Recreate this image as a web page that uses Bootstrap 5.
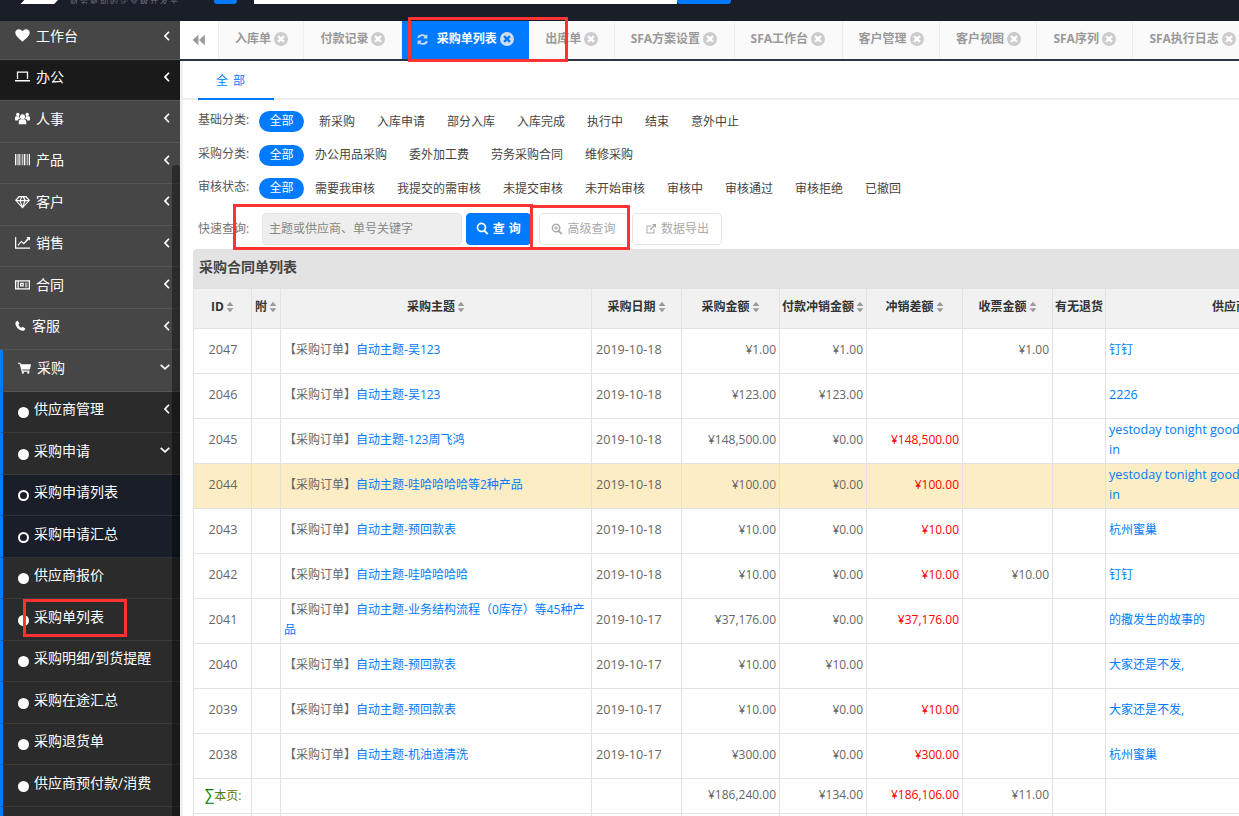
<!DOCTYPE html>
<html lang="zh-CN">
<head>
<meta charset="utf-8">
<title>采购单列表</title>
<link href="https://cdn.jsdelivr.net/npm/bootstrap@5.3.0/dist/css/bootstrap.min.css" rel="stylesheet">
<style>
html,body{height:100%;overflow:hidden}
body{font-family:"Open Sans","Noto Sans CJK SC",sans-serif;font-size:12px;color:#666;background:#fff}
.ico{fill:currentColor;flex:none}
.page-root{width:1239px;height:816px;overflow:hidden}
.red-box{position:absolute;border:3px solid #f33;pointer-events:none;z-index:5}
.rb-tab{left:408px;top:17px;width:160px;height:45px}
.rb-search{left:233px;top:204px;width:300px;height:46px}
.rb-adv{left:530px;top:205px;width:100px;height:45px}
.rb-menu{left:23px;top:599px;width:104px;height:38px}
.top-head{height:21px;background:#1a1e29;overflow:hidden}
.logo-bit{width:48px;height:4px;margin-left:10px;background:#fff;clip-path:polygon(0 0,100% 0,92% 100%,22% 100%,30% 0)}
.logo-txt{margin-left:12px;width:110px;height:4px;overflow:hidden;font-size:8px;line-height:1px;color:#6d7078;letter-spacing:2px;white-space:nowrap}
.head-b1{width:23px;height:4px;margin-left:34px;background:#007bff;border-radius:0 0 3px 3px}
.head-in{width:423px;height:4px;margin-left:17px;background:#fff}
.head-b2{width:54px;height:4px;background:#007bff;border-radius:0 0 3px 3px}
.side{width:180px;height:795px;background:#2b2b2b;overflow:hidden}
.side-scroll{position:absolute;left:172px;top:165px;width:8px;height:651px;background:rgba(0,0,0,.38);border-radius:4px 4px 0 0;z-index:2}
.s-item{height:41.5px;display:flex;align-items:center;padding:0 10px 6px 15px;color:#fff;font-size:14px;background:#464646;border-bottom:1px solid #555;text-decoration:none}
.s-first{height:38.5px;padding-bottom:8px}
.s-dark{background:#1a1a1a}
.s-item .ico{margin-right:6px}
.s-item .ico.chev{margin-right:0}
.s-lab{flex:1;white-space:nowrap}
.s-open{border-left:3px solid #007bff;padding-left:15px}
.s-sub{background:#2b2b2b;border-bottom-color:#3b3b3b;padding-left:15px}
.s-deep{background:#1a1e29;border-bottom-color:#2d313b}
.dot{width:11px;height:11px;border-radius:50%;background:#fff;flex:none;margin:8px 5px 0 0}
.dot-o{background:none;border:2px solid #fff}
.main-col{width:1059px;height:795px;background:#fff;overflow:hidden}
.tab-bar{height:40px;background:#fafafa;border-bottom:2px solid #2d3545;flex-wrap:nowrap;overflow:hidden}
.tab-back{width:39px;background:#fff;color:#999;border-right:1px solid #eee}
.tab-i{height:38px;padding:0 15.400px 2px 16px;display:flex;align-items:center;font-weight:700;color:#999;border-right:1px solid #eee;white-space:nowrap;flex:none;text-decoration:none}
.tab-i .ico{margin-left:3px;color:#ccc}
.tab-sfa{padding-right:16.500px}
.tab-on{background:#007bff;color:#fff;padding-left:14px;border-right:0}
.tab-on .ico-ref{margin:0 8px 0 0;color:#c9d8ea}
.body-wrap{border-left:3px solid #f0f0f0;height:755px}
.sub-tabs{height:39px;margin:0;padding-left:15px;border-bottom:2px solid #eee}
.sub-tab{width:76px;height:39px;padding:2px 10px 0 0;border-bottom:2px solid #007bff;color:#007bff;display:flex;align-items:center;justify-content:center;text-decoration:none;letter-spacing:1px}
.f-row{height:33.500px;padding-left:15px;color:#444;white-space:nowrap}
.f-first{margin-top:5px}
.f-lab{width:61px;color:#555;margin-top:-3px;flex:none}
.f-pill{width:45px;height:21px;border-radius:11px;background:#007bff;color:#fff;display:flex;align-items:center;justify-content:center;padding-bottom:1px;text-decoration:none}
.f-pill.gap-r{margin-right:4px}
.f-link{padding:0 11px;color:#444;text-decoration:none}
.q-row{height:32px;padding-left:15px;margin-top:7px;margin-bottom:4px}
.q-lab{width:64px;color:#777;flex:none}
.q-in{width:200px;height:32px;font-size:12px;background:#eee;border:1px solid #e5e5e5;padding:0 6px;color:#666;border-radius:4px}
.q-in::placeholder{color:#888;opacity:1}
.q-btn{height:32px;font-size:12px;font-weight:700;padding:0;border-radius:4px;display:flex;align-items:center;justify-content:center;background:#007bff;border-color:#007bff;width:65px;margin-left:4px;color:#fff}
.q-go{letter-spacing:.5px}
.q-ghost{background:#fff;border:1px solid #e5e5e5;color:#aaa;font-weight:400;width:89px;margin-left:8px}
.q-ghost2{width:90px;margin-left:4px}
.q-btn .ico{margin-right:4px}
.panel-w{margin-left:10px;width:1161px}
.panel-t{height:39px;background:#e3e3e3;border-radius:4px 4px 0 0;font-size:14px;font-weight:700;color:#444;padding:0 6px 3px;display:flex;align-items:center}
.grid-t{table-layout:fixed;width:1161px;margin:0;border-color:#e2e2e2;color:#666}
.grid-t>:not(caption)>*>*{padding:0 3px 2px 4px;vertical-align:middle;line-height:20px;color:inherit;background:transparent;box-shadow:none;border-color:#e2e2e2}
.grid-t>thead>tr>th{background:#f1f1f1;font-weight:700;color:#333;text-align:center;white-space:nowrap;padding:0 0 3px}
.grid-t thead tr{height:40px}
.grid-t tbody tr{height:45px}
.grid-t>tbody>tr>td.n{text-align:right;padding-right:3px}
.grid-t>tbody>tr>td.d{font-size:12.6px}
.grid-t>tbody>tr>td.c{text-align:center;font-size:12.6px}
.grid-t>tbody>tr>td.r{color:#f00;text-align:right}
.grid-t>tbody>tr>td.subj{padding-left:3px}
.grid-t>tbody>tr>td.sup{padding-left:3px;white-space:nowrap}
.grid-t a{color:#007bff;text-decoration:none}
.grid-t a.lat{font-size:12.6px}
.grid-t tbody tr.row-warn{background:#fdedc4}
.grid-t tbody tr.row-sum{height:35px}
.grid-t>tbody>tr.row-sum>td{padding-bottom:2px}
.grid-t>tbody>tr>td.sig{color:#5a7a00;font-size:12px}
.sig b{color:#008000;font-weight:400;font-size:15px}
.grid-t tbody tr.row-end{height:10px}
.sort-i{color:#999;margin-left:2px;vertical-align:-2px}
</style>
</head>
<body>
<svg width="0" height="0" class="position-absolute">
<defs>
<symbol id="i-heart" viewBox="0 0 24 24"><path d="M12 22C5 16 .5 12 .5 7.300.5 4 3 1.800 6.300 1.800c2.300 0 4.300 1.100 5.700 3.200 1.400-2.100 3.400-3.200 5.700-3.200 3.300 0 5.800 2.200 5.800 5.500C23.500 12 19 16 12 22z"/></symbol>
<symbol id="i-laptop" viewBox="0 0 24 24"><path d="M3 4h18v12h-2V6H5v10H3zM0 17.500h24V20H0z"/></symbol>
<symbol id="i-users" viewBox="0 0 24 24"><circle cx="12" cy="9" r="4"/><circle cx="4.500" cy="5.500" r="2.700"/><circle cx="19.500" cy="5.500" r="2.700"/><path d="M6 21v-4c0-2.500 2-4 3-4h6c1 0 3 1.500 3 4v4zM0 14v-3c0-1.500 1-2.500 2-2.500h4.300c.3 1.500 1 2.500 2 3.500C6 12.500 4.800 14 4.600 15H1C.4 15 0 14.600 0 14zM24 14v-3c0-1.500-1-2.500-2-2.500h-4.300c-.3 1.500-1 2.500-2 3.500 2.300.5 3.500 2 3.700 3H23c.6 0 1-.4 1-1z"/></symbol>
<symbol id="i-bar" viewBox="0 0 24 24"><path d="M0 3h2v18H0zM3 3h1v18H3zM5.500 3h2v18h-2zM9 3h1v18H9zM11.500 3h1v18h-1zM14 3h2v18h-2zM17 3h1v18h-1zM19.500 3h1v18h-1zM22 3h2v18h-2z"/></symbol>
<symbol id="i-gem" viewBox="0 0 24 24"><path d="M6 3h12l6 7-12 13L0 10zm1 2-4 4.500h4.500L9.500 5zm5 0h-.5L9.500 9.500h5L12.500 5zm3 0 2 4.500H21L17 5zM3.500 11.500l6.500 7-2.800-7zm6 0 2.500 7.500 2.500-7.500zm7.300 0-2.800 7 6.500-7z"/></symbol>
<symbol id="i-chart" viewBox="0 0 24 24"><path d="M0 3h2v17h22v2H0zM4 16l6-7 4 3.500L20 5l-2-2h6v6l-2-2-8 8-4-3.500-4.500 5.500z"/></symbol>
<symbol id="i-news" viewBox="0 0 24 24"><path d="M0 5h24v15H0zm2 2v11h2V7zm4 0v11h16V7zm2 2h6v6H8zm2 2v2h2v-2zm6-2h4v1.500h-4zm0 3h4v1.500h-4zm0 3h4v1.500h-4z"/></symbol>
<symbol id="i-phone" viewBox="0 0 24 24"><path d="M6 1.500l3.800 6-2.300 2.800c1 3 3.300 5.500 6.300 6.700l2.700-2.300 6 3.800c-.5 3-3 5-5.500 5C9 23.500.8 14.300.8 7 1 4.300 3.300 2 6 1.500z"/></symbol>
<symbol id="i-cart" viewBox="0 0 24 24"><path d="M0 3h4.500l.7 3H24l-2 9.500H8l.5 2.200H21v2H6.800L3 5H0z"/><circle cx="9" cy="21.500" r="2"/><circle cx="19" cy="21.500" r="2"/></symbol>
<symbol id="i-left" viewBox="1 1 7.500 14"><path d="M7.500 2 2 8l5.500 6" fill="none" stroke="currentColor" stroke-width="2.400"/></symbol>
<symbol id="i-down" viewBox="1 1 14 8"><path d="M2 2l6 5.500L14 2" fill="none" stroke="currentColor" stroke-width="2.400"/></symbol>
<symbol id="i-back" viewBox="0 0 24 24"><path d="M11 3v18L1 12zM22 3v18L12 12z"/></symbol>
<symbol id="i-close" viewBox="0 0 24 24"><circle cx="12" cy="12" r="12"/><path d="M7 7l10 10M17 7 7 17" stroke="#fff" stroke-width="4"/></symbol>
<symbol id="i-close-on" viewBox="0 0 24 24"><circle cx="12" cy="12" r="12" fill="#cfdcec"/><path d="M7 7l10 10M17 7 7 17" stroke="#007bff" stroke-width="4"/></symbol>
<symbol id="i-ref" viewBox="0 0 24 24"><path d="M21 2v8h-8l3-3C13 4.500 8 5 5.500 9.500L2 8C5 1.500 13 .500 18.500 4.500zM3 22v-8h8l-3 3c3 2.500 8 2 10.500-2.500L22 16c-3 6.500-11 7.500-16.500 3.500z"/></symbol>
<symbol id="i-search" viewBox="0 0 24 24"><path d="M10 1a9 9 0 0 1 7.200 14.400l5.800 5.800-2.500 2.500-5.800-5.800A9 9 0 1 1 10 1zm0 3.200a5.800 5.800 0 1 0 0 11.600 5.800 5.800 0 0 0 0-11.600z"/></symbol>
<symbol id="i-splus" viewBox="0 0 24 24"><path d="M10 1a9 9 0 0 1 7.200 14.400l5.800 5.800-2.500 2.500-5.800-5.800A9 9 0 1 1 10 1zm0 3.200a5.800 5.800 0 1 0 0 11.600 5.800 5.800 0 0 0 0-11.600zM9 6h2v3h3v2h-3v3H9v-3H6V9h3z"/></symbol>
<symbol id="i-ext" viewBox="0 0 24 24"><path d="M3 5h10v2H5v12h12v-7h2v9H3zM14 2h8v8l-3-3-7 7-2-2 7-7z"/></symbol>
<symbol id="i-sort" viewBox="0 0 10 16"><path d="M5 1l4.500 5.500h-9zM5 15 .5 9.500h9z"/></symbol>
</defs>
</svg>

<div class="page-root position-relative d-flex flex-column">
  <div class="red-box rb-tab"></div>
  <div class="red-box rb-search"></div>
  <div class="red-box rb-adv"></div>
  <div class="red-box rb-menu"></div>
  <div class="side-scroll"></div>

  <header class="top-head d-flex align-items-start">
    <div class="logo-bit"></div>
    <div class="logo-txt">财务驱动的企业级开发平台</div>
    <div class="head-b1"></div>
    <div class="head-in"></div>
    <div class="head-b2"></div>
  </header>

  <div class="d-flex">
    <nav class="side flex-shrink-0">
      <a class="s-item s-first"><svg class="ico" width="15" height="15"><use href="#i-heart"/></svg><span class="s-lab">工作台</span><svg class="ico chev" width="6" height="10"><use href="#i-left"/></svg></a>
      <a class="s-item s-dark"><svg class="ico" width="15" height="15"><use href="#i-laptop"/></svg><span class="s-lab">办公</span><svg class="ico chev" width="6" height="10"><use href="#i-left"/></svg></a>
      <a class="s-item"><svg class="ico" width="15" height="15"><use href="#i-users"/></svg><span class="s-lab">人事</span><svg class="ico chev" width="6" height="10"><use href="#i-left"/></svg></a>
      <a class="s-item"><svg class="ico" width="15" height="15"><use href="#i-bar"/></svg><span class="s-lab">产品</span><svg class="ico chev" width="6" height="10"><use href="#i-left"/></svg></a>
      <a class="s-item"><svg class="ico" width="15" height="15"><use href="#i-gem"/></svg><span class="s-lab">客户</span><svg class="ico chev" width="6" height="10"><use href="#i-left"/></svg></a>
      <a class="s-item"><svg class="ico" width="15" height="15"><use href="#i-chart"/></svg><span class="s-lab">销售</span><svg class="ico chev" width="6" height="10"><use href="#i-left"/></svg></a>
      <a class="s-item"><svg class="ico" width="15" height="15"><use href="#i-news"/></svg><span class="s-lab">合同</span><svg class="ico chev" width="6" height="10"><use href="#i-left"/></svg></a>
      <a class="s-item"><svg class="ico" width="11" height="13"><use href="#i-phone"/></svg><span class="s-lab">客服</span><svg class="ico chev" width="6" height="10"><use href="#i-left"/></svg></a>
      <a class="s-item s-open"><svg class="ico" width="13" height="13"><use href="#i-cart"/></svg><span class="s-lab">采购</span><svg class="ico chev" width="10" height="6"><use href="#i-down"/></svg></a>
      <a class="s-item s-open s-sub"><span class="dot"></span><span class="s-lab">供应商管理</span><svg class="ico chev" width="6" height="10"><use href="#i-left"/></svg></a>
      <a class="s-item s-open s-sub"><span class="dot"></span><span class="s-lab">采购申请</span><svg class="ico chev" width="10" height="6"><use href="#i-down"/></svg></a>
      <a class="s-item s-open s-sub s-deep"><span class="dot dot-o"></span><span class="s-lab">采购申请列表</span></a>
      <a class="s-item s-open s-sub s-deep"><span class="dot dot-o"></span><span class="s-lab">采购申请汇总</span></a>
      <a class="s-item s-open s-sub"><span class="dot"></span><span class="s-lab">供应商报价</span></a>
      <a class="s-item s-open s-sub"><span class="dot"></span><span class="s-lab">采购单列表</span></a>
      <a class="s-item s-open s-sub"><span class="dot"></span><span class="s-lab">采购明细/到货提醒</span></a>
      <a class="s-item s-open s-sub"><span class="dot"></span><span class="s-lab">采购在途汇总</span></a>
      <a class="s-item s-open s-sub"><span class="dot"></span><span class="s-lab">采购退货单</span></a>
      <a class="s-item s-open s-sub"><span class="dot"></span><span class="s-lab">供应商预付款/消费</span></a>
      <div class="s-item s-open s-sub"></div>
    </nav>

    <main class="main-col">
      <div class="tab-bar d-flex">
        <a class="tab-back d-flex align-items-center justify-content-center flex-shrink-0"><svg class="ico" width="14" height="14"><use href="#i-back"/></svg></a>
        <a class="tab-i">入库单<svg class="ico" width="14" height="14"><use href="#i-close"/></svg></a>
        <a class="tab-i">付款记录<svg class="ico" width="14" height="14"><use href="#i-close"/></svg></a>
        <a class="tab-i tab-on"><svg class="ico ico-ref" width="13" height="13"><use href="#i-ref"/></svg>采购单列表<svg class="ico" width="14" height="14"><use href="#i-close-on"/></svg></a>
        <a class="tab-i">出库单<svg class="ico" width="14" height="14"><use href="#i-close"/></svg></a>
        <a class="tab-i tab-sfa">SFA方案设置<svg class="ico" width="14" height="14"><use href="#i-close"/></svg></a>
        <a class="tab-i tab-sfa">SFA工作台<svg class="ico" width="14" height="14"><use href="#i-close"/></svg></a>
        <a class="tab-i">客户管理<svg class="ico" width="14" height="14"><use href="#i-close"/></svg></a>
        <a class="tab-i">客户视图<svg class="ico" width="14" height="14"><use href="#i-close"/></svg></a>
        <a class="tab-i tab-sfa">SFA序列<svg class="ico" width="14" height="14"><use href="#i-close"/></svg></a>
        <a class="tab-i tab-sfa">SFA执行日志<svg class="ico" width="14" height="14"><use href="#i-close"/></svg></a>
      </div>

      <div class="body-wrap">
        <div class="sub-tabs d-flex"><a class="sub-tab">全&nbsp;部</a></div>

        <div class="f-row f-first d-flex align-items-center">
          <span class="f-lab">基础分类:</span>
          <a class="f-pill gap-r">全部</a><a class="f-link">新采购</a><a class="f-link">入库申请</a><a class="f-link">部分入库</a><a class="f-link">入库完成</a><a class="f-link">执行中</a><a class="f-link">结束</a><a class="f-link">意外中止</a>
        </div>
        <div class="f-row d-flex align-items-center">
          <span class="f-lab">采购分类:</span>
          <a class="f-pill">全部</a><a class="f-link">办公用品采购</a><a class="f-link">委外加工费</a><a class="f-link">劳务采购合同</a><a class="f-link">维修采购</a>
        </div>
        <div class="f-row d-flex align-items-center">
          <span class="f-lab">审核状态:</span>
          <a class="f-pill">全部</a><a class="f-link">需要我审核</a><a class="f-link">我提交的需审核</a><a class="f-link">未提交审核</a><a class="f-link">未开始审核</a><a class="f-link">审核中</a><a class="f-link">审核通过</a><a class="f-link">审核拒绝</a><a class="f-link">已撤回</a>
        </div>

        <div class="q-row d-flex align-items-center">
          <span class="q-lab">快速查询:</span>
          <input class="form-control q-in" placeholder="主题或供应商、单号关键字">
          <button class="btn btn-primary q-btn q-go"><svg class="ico" width="13" height="13"><use href="#i-search"/></svg>查&nbsp;询</button>
          <button class="btn q-btn q-ghost"><svg class="ico" width="12" height="12"><use href="#i-splus"/></svg>高级查询</button>
          <button class="btn q-btn q-ghost q-ghost2"><svg class="ico" width="12" height="12"><use href="#i-ext"/></svg>数据导出</button>
        </div>

        <div class="panel-w">
          <div class="panel-t">采购合同单列表</div>
          <table class="table table-bordered grid-t">
            <colgroup><col style="width:58px"><col style="width:29px"><col style="width:311px"><col style="width:90px"><col style="width:98px"><col style="width:87px"><col style="width:96px"><col style="width:90px"><col style="width:53px"><col style="width:249px"></colgroup>
            <thead>
              <tr>
                <th>ID<svg class="ico sort-i" width="8" height="12"><use href="#i-sort"/></svg></th>
                <th>附<svg class="ico sort-i" width="8" height="12"><use href="#i-sort"/></svg></th>
                <th>采购主题<svg class="ico sort-i" width="8" height="12"><use href="#i-sort"/></svg></th>
                <th>采购日期<svg class="ico sort-i" width="8" height="12"><use href="#i-sort"/></svg></th>
                <th>采购金额<svg class="ico sort-i" width="8" height="12"><use href="#i-sort"/></svg></th>
                <th>付款冲销金额<svg class="ico sort-i" width="8" height="12"><use href="#i-sort"/></svg></th>
                <th>冲销差额<svg class="ico sort-i" width="8" height="12"><use href="#i-sort"/></svg></th>
                <th>收票金额<svg class="ico sort-i" width="8" height="12"><use href="#i-sort"/></svg></th>
                <th>有无退货</th>
                <th>供应商</th>
              </tr>
            </thead>
            <tbody>
              <tr><td class="c">2047</td><td></td><td class="subj">【采购订单】<a href="#">自动主题-吴123</a></td><td class="d">2019-10-18</td><td class="n">¥1.00</td><td class="n">¥1.00</td><td class="r"></td><td class="n">¥1.00</td><td></td><td class="sup"><a href="#">钉钉</a></td></tr>
              <tr><td class="c">2046</td><td></td><td class="subj">【采购订单】<a href="#">自动主题-吴123</a></td><td class="d">2019-10-18</td><td class="n">¥123.00</td><td class="n">¥123.00</td><td class="r"></td><td class="n"></td><td></td><td class="sup"><a class="lat" href="#">2226</a></td></tr>
              <tr><td class="c">2045</td><td></td><td class="subj">【采购订单】<a href="#">自动主题-123周飞鸿</a></td><td class="d">2019-10-18</td><td class="n">¥148,500.00</td><td class="n">¥0.00</td><td class="r">¥148,500.00</td><td class="n"></td><td></td><td class="sup"><a class="lat" href="#">yestoday tonight good morning good<br>in</a></td></tr>
              <tr class="row-warn"><td class="c">2044</td><td></td><td class="subj">【采购订单】<a href="#">自动主题-哇哈哈哈哈等2种产品</a></td><td class="d">2019-10-18</td><td class="n">¥100.00</td><td class="n">¥0.00</td><td class="r">¥100.00</td><td class="n"></td><td></td><td class="sup"><a class="lat" href="#">yestoday tonight good morning good<br>in</a></td></tr>
              <tr><td class="c">2043</td><td></td><td class="subj">【采购订单】<a href="#">自动主题-预回款表</a></td><td class="d">2019-10-18</td><td class="n">¥10.00</td><td class="n">¥0.00</td><td class="r">¥10.00</td><td class="n"></td><td></td><td class="sup"><a href="#">杭州蜜巢</a></td></tr>
              <tr><td class="c">2042</td><td></td><td class="subj">【采购订单】<a href="#">自动主题-哇哈哈哈哈</a></td><td class="d">2019-10-18</td><td class="n">¥10.00</td><td class="n">¥0.00</td><td class="r">¥10.00</td><td class="n">¥10.00</td><td></td><td class="sup"><a href="#">钉钉</a></td></tr>
              <tr><td class="c">2041</td><td></td><td class="subj">【采购订单】<a href="#">自动主题-业务结构流程（0库存）等45种产品</a></td><td class="d">2019-10-17</td><td class="n">¥37,176.00</td><td class="n">¥0.00</td><td class="r">¥37,176.00</td><td class="n"></td><td></td><td class="sup"><a href="#">的撒发生的故事的</a></td></tr>
              <tr><td class="c">2040</td><td></td><td class="subj">【采购订单】<a href="#">自动主题-预回款表</a></td><td class="d">2019-10-17</td><td class="n">¥10.00</td><td class="n">¥10.00</td><td class="r"></td><td class="n"></td><td></td><td class="sup"><a href="#">大家还是不发,</a></td></tr>
              <tr><td class="c">2039</td><td></td><td class="subj">【采购订单】<a href="#">自动主题-预回款表</a></td><td class="d">2019-10-17</td><td class="n">¥10.00</td><td class="n">¥0.00</td><td class="r">¥10.00</td><td class="n"></td><td></td><td class="sup"><a href="#">大家还是不发,</a></td></tr>
              <tr><td class="c">2038</td><td></td><td class="subj">【采购订单】<a href="#">自动主题-机油道清洗</a></td><td class="d">2019-10-17</td><td class="n">¥300.00</td><td class="n">¥0.00</td><td class="r">¥300.00</td><td class="n"></td><td></td><td class="sup"><a href="#">杭州蜜巢</a></td></tr>
              <tr class="row-sum"><td class="c sig"><b>∑</b>本页:</td><td></td><td></td><td></td><td class="n">¥186,240.00</td><td class="n">¥134.00</td><td class="r">¥186,106.00</td><td class="n">¥11.00</td><td></td><td></td></tr>
              <tr class="row-end"><td></td><td></td><td></td><td></td><td></td><td></td><td></td><td></td><td></td><td></td></tr>
            </tbody>
          </table>
        </div>
      </div>
    </main>
  </div>
</div>
<script src="https://cdn.jsdelivr.net/npm/bootstrap@5.3.0/dist/js/bootstrap.bundle.min.js"></script>
</body>
</html>
